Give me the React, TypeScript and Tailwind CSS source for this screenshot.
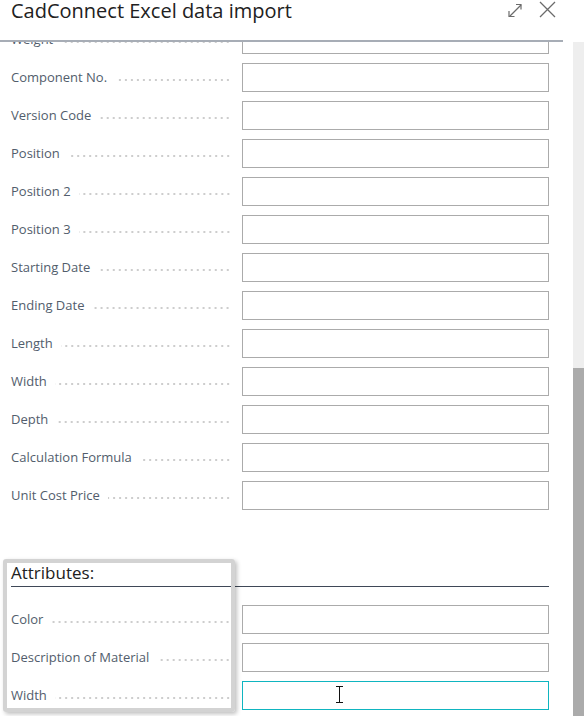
import React from "react";

const fields = [
  "Weight",
  "Component No.",
  "Version Code",
  "Position",
  "Position 2",
  "Position 3",
  "Starting Date",
  "Ending Date",
  "Length",
  "Width",
  "Depth",
  "Calculation Formula",
  "Unit Cost Price",
];

const attributes = ["Color", "Description of Material", "Width"];

function FieldRow({ label, focused }: { label: string; focused?: boolean }) {
  return (
    <div className="flex items-center h-[29px]">
      <div className="w-[220px] flex items-center pt-[1px]">
        <span className="whitespace-nowrap text-[13px] text-[#525d6c]">{label}</span>
        <div className="flex-1 ml-[8px] mt-[3px] h-[2px] bg-[radial-gradient(circle,#cdcdcd_0.9px,transparent_1.1px)] bg-[length:6px_2px] bg-right" />
      </div>
      <div
        className={
          focused
            ? "ml-[11px] w-[307px] h-[29px] border border-[#0fb5c0] bg-white"
            : "ml-[11px] w-[307px] h-[29px] border border-[#ababab] bg-white"
        }
      />
    </div>
  );
}

export default function App() {
  return (
    <div className="relative w-[584px] h-[716px] bg-white overflow-hidden flex flex-col font-['Open_Sans',sans-serif]">
      {/* header */}
      <div className="h-[40px] flex items-start justify-between pl-[11px] pr-[28px] bg-white">
        <h1 className="text-[20px] leading-[22px] text-[#212121]">CadConnect Excel data import</h1>
        <div className="flex items-center gap-[16px] mt-[1px]">
          <svg width="16" height="16" viewBox="0 0 16 16" fill="none" stroke="#6b6b6b" strokeWidth="1.2">
            <path d="M2.5 14.5 L14 3" />
            <path d="M9 2.5 H14 V7.5" />
            <path d="M2 9 V14.5 H7.5" />
          </svg>
          <svg width="17" height="17" viewBox="0 0 17 17" fill="none" stroke="#6b6b6b" strokeWidth="1.3">
            <path d="M1 1 L16 16 M16 1 L1 16" />
          </svg>
        </div>
      </div>
      <div className="h-[2px] w-[563px] bg-[#a7adb6]" />

      <div className="flex flex-1 min-h-0">
        <div className="w-[573px] overflow-hidden">
          <div className="mt-[-17px] pl-[11px] flex flex-col">
            <div className="flex flex-col gap-[9px]">
              {fields.map((f) => (
                <FieldRow key={f} label={f} />
              ))}
            </div>

            <div className="mt-[52px] w-[538px] h-[25px] border-b border-[#3f4857] text-[17px] leading-[22px] text-[#212121]">
              Attributes:
            </div>

            <div className="mt-[18px] flex flex-col gap-[9px]">
              {attributes.map((a, i) => (
                <FieldRow key={a + i} label={a} focused={i === attributes.length - 1} />
              ))}
            </div>
          </div>
        </div>
        {/* scrollbar */}
        <div className="w-[11px] bg-[#eeeeee] flex flex-col">
          <div className="mt-[326px] flex-1 bg-[#ababab]" />
        </div>
      </div>

      {/* annotation highlight */}
      <div className="absolute left-[3px] top-[559px] w-[232px] h-[153px] border-[4px] border-[#d3d3d3] rounded-[3px] shadow-[2px_2px_4px_rgba(0,0,0,0.25)]" />

      {/* text cursor */}
      <svg className="absolute left-[335px] top-[686px]" width="9" height="17" viewBox="0 0 9 17" fill="none" stroke="#111" strokeWidth="1">
        <path d="M1 0.5 H8 M1 16.5 H8 M4.5 0.5 V16.5" />
      </svg>
    </div>
  );
}
